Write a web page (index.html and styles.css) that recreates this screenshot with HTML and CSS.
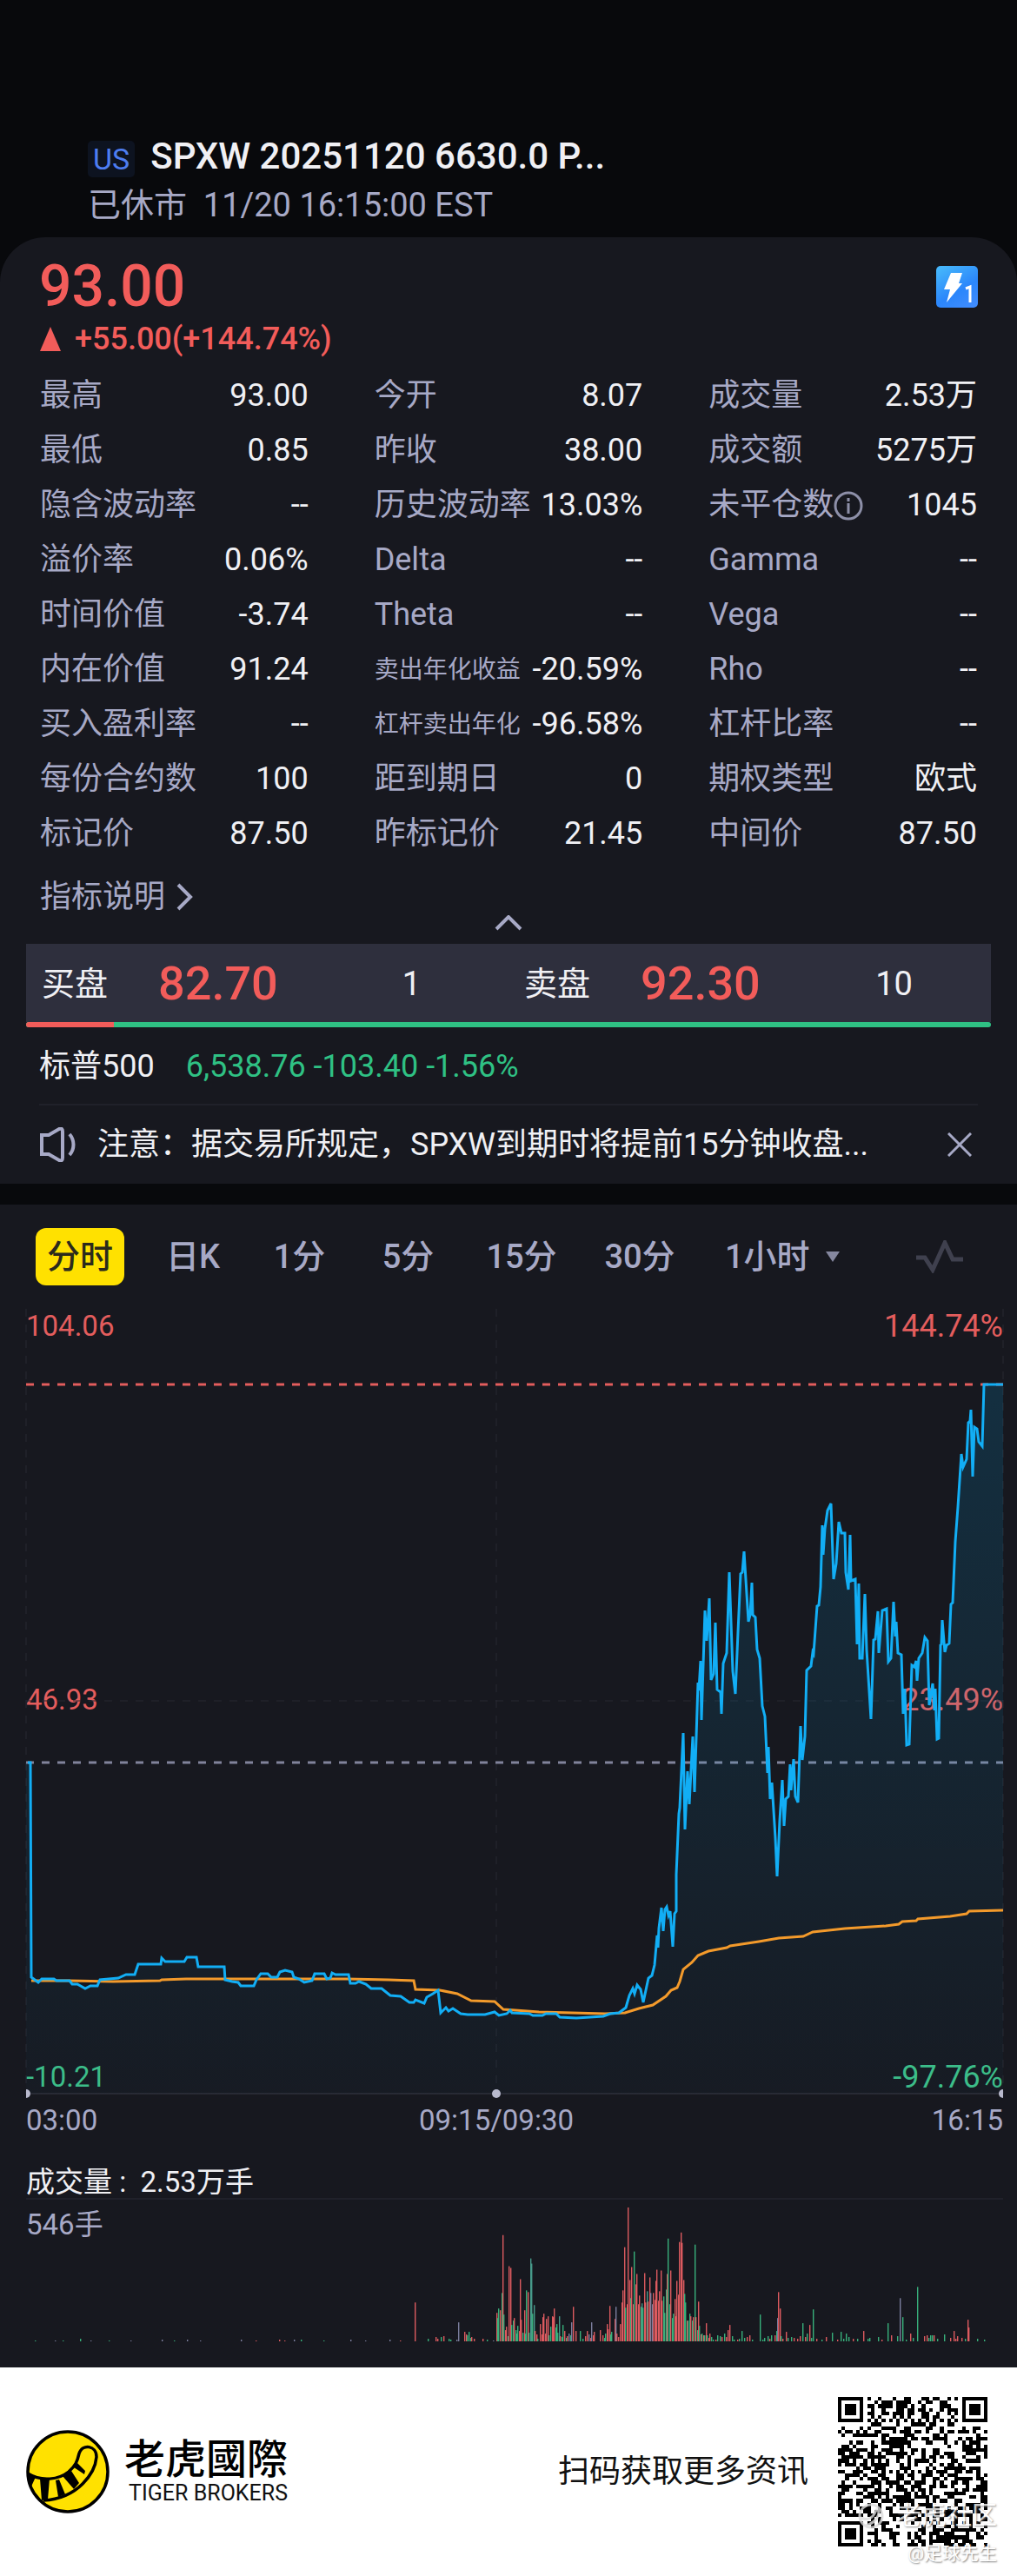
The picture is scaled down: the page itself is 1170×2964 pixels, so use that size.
FILE: index.html
```html
<!DOCTYPE html>
<html lang="zh-CN">
<head>
    <meta charset="utf-8">
    <meta name="viewport" content="width=device-width, initial-scale=1">
    <title>SPXW 20251120 6630.0 PUT</title>
    <link rel="stylesheet" href="styles.css">
</head>
<body>
    <header class="top">
        <div class="top-title">
            <span class="market">US</span>
            <h1>SPXW 20251120 6630.0 P...</h1>
        </div>
        <p class="top-status">已休市&nbsp; 11/20 16:15:00 EST</p>
    </header>

    <main>
        <section class="card quote">
            <div class="price-row">
                <span class="price">93.00</span>
                <svg class="level-icon" viewBox="0 0 48 48" role="img" aria-label="Level 1">
                    <defs>
                        <linearGradient id="lv" x1="0.2" y1="0" x2="0.8" y2="1">
                            <stop offset="0" stop-color="#45b5fb"/>
                            <stop offset="0.6" stop-color="#2b86fb"/>
                            <stop offset="1" stop-color="#3f8cff"/>
                        </linearGradient>
                    </defs>
                    <rect width="48" height="48" rx="5" fill="url(#lv)"/>
                    <path d="M17 8h13l-4 12h4L12 42l4-15H9z" fill="#fff"/>
                    <path d="M34 26l5-2v18" fill="none" stroke="#fff" stroke-width="3"/>
                </svg>
            </div>
            <p class="change">
                <svg class="up" viewBox="0 0 24 28"><path d="M12 0l12 28H0z"/></svg>
                +55.00(+144.74%)
            </p>

            <dl class="stats">
                <div><dt>最高</dt><dd>93.00</dd></div>
                <div><dt>今开</dt><dd>8.07</dd></div>
                <div><dt>成交量</dt><dd>2.53万</dd></div>
                <div><dt>最低</dt><dd>0.85</dd></div>
                <div><dt>昨收</dt><dd>38.00</dd></div>
                <div><dt>成交额</dt><dd>5275万</dd></div>
                <div><dt>隐含波动率</dt><dd>--</dd></div>
                <div><dt>历史波动率</dt><dd>13.03%</dd></div>
                <div>
                    <dt>未平仓数<svg class="info" viewBox="0 0 34 34"><circle cx="17" cy="17" r="15"/><path d="M17 14v12M17 8v4"/></svg></dt>
                    <dd>1045</dd>
                </div>
                <div><dt>溢价率</dt><dd>0.06%</dd></div>
                <div><dt>Delta</dt><dd>--</dd></div>
                <div><dt>Gamma</dt><dd>--</dd></div>
                <div><dt>时间价值</dt><dd>-3.74</dd></div>
                <div><dt>Theta</dt><dd>--</dd></div>
                <div><dt>Vega</dt><dd>--</dd></div>
                <div><dt>内在价值</dt><dd>91.24</dd></div>
                <div><dt class="small">卖出年化收益</dt><dd>-20.59%</dd></div>
                <div><dt>Rho</dt><dd>--</dd></div>
                <div><dt>买入盈利率</dt><dd>--</dd></div>
                <div><dt class="small">杠杆卖出年化</dt><dd>-96.58%</dd></div>
                <div><dt>杠杆比率</dt><dd>--</dd></div>
                <div><dt>每份合约数</dt><dd>100</dd></div>
                <div><dt>距到期日</dt><dd>0</dd></div>
                <div><dt>期权类型</dt><dd>欧式</dd></div>
                <div><dt>标记价</dt><dd>87.50</dd></div>
                <div><dt>昨标记价</dt><dd>21.45</dd></div>
                <div><dt>中间价</dt><dd>87.50</dd></div>
            </dl>

            <a class="explain" href="#">指标说明
                <svg viewBox="0 0 20 32"><path d="M3 2l14 14L3 30"/></svg>
            </a>
            <button class="collapse" type="button" aria-label="收起">
                <svg viewBox="0 0 32 18"><path d="M2 16L16 2l14 14"/></svg>
            </button>

            <div class="book">
                <div class="side"><span>买盘</span><b>82.70</b><span class="size">1</span></div>
                <div class="side"><span>卖盘</span><b>92.30</b><span class="size">10</span></div>
            </div>
            <div class="ratio"><i style="width: 9.1%"></i></div>

            <p class="index"><span>标普500</span><span class="down">6,538.76 -103.40 -1.56%</span></p>

            <div class="notice">
                <svg class="horn" viewBox="0 0 42 40">
                    <path d="M2 9h8l12-7c3-1 4 0 4 3v30c0 3-1 4-4 3l-12-7H2z"/>
                    <path d="M34 8c6 7 6 17 0 24"/>
                </svg>
                <p>注意：据交易所规定，SPXW到期时将提前15分钟收盘...</p>
                <button type="button" aria-label="关闭">
                    <svg viewBox="0 0 28 28"><path d="M1 1l26 26M27 1L1 27"/></svg>
                </button>
            </div>
        </section>

        <section class="card chart">
            <nav class="tabs">
                <button class="active" type="button">分时</button>
                <button type="button">日K</button>
                <button type="button">1分</button>
                <button type="button">5分</button>
                <button type="button">15分</button>
                <button type="button">30分</button>
                <div class="period">
                    <select aria-label="周期"><option>1小时</option></select>
                    <svg viewBox="0 0 16 12"><path d="M0 0h16L8 12z"/></svg>
                </div>
                <button type="button" aria-label="指标">
                    <svg class="wave" viewBox="0 0 54 38"><path d="M0 20h10l9 14L33 3l9 19h12"/></svg>
                </button>
            </nav>

            <div class="plot">
                <span class="tick high left">104.06</span>
                <span class="tick high right">144.74%</span>
                <span class="tick mid left">46.93</span>
                <span class="tick mid right">23.49%</span>
                <span class="tick low left">-10.21</span>
                <span class="tick low right">-97.76%</span>
                <svg viewBox="0 6 1170 904" preserveAspectRatio="none">
                    <defs>
                        <linearGradient id="fill" x1="0" y1="0" x2="0" y2="1">
                            <stop offset="0" stop-color="#00b4ff" stop-opacity="0.15"/>
                            <stop offset="1" stop-color="#00b4ff" stop-opacity="0.02"/>
                        </linearGradient>
                    </defs>
                    <path class="grid dash" d="M571 6V909M30 6V909M1154 6V909M30 457H1154"/>
                    <path class="grid" d="M30 909H1154"/>
                    <path class="line-high" d="M30 93H1154"/>
                    <path class="line-prev" d="M30 528H1154"/>
                    <polygon id="area" fill="url(#fill)"/>
                    <polyline id="avg"/>
                    <polyline id="last"/>
                </svg>
                <i class="dot first"></i>
                <i class="dot middle"></i>
                <i class="dot end"></i>
            </div>
            <div class="times"><span>03:00</span><span>09:15/09:30</span><span>16:15</span></div>

            <p class="vol-title">成交量 :&nbsp; 2.53万手</p>
            <div class="vol">
                <span>546手</span>
                <svg id="volume" viewBox="0 0 1170 164" preserveAspectRatio="none"></svg>
            </div>
        </section>
    </main>

    <footer>
        <svg class="logo" viewBox="0 0 96 96">
            <circle cx="48" cy="48" r="46" fill="#ffe100" stroke="#000" stroke-width="3.5"/>
            <path d="M2 50C18 60 38 57 49 48c8-7 10-12 12-21 4-12 20-9 20 4-1 12-7 22-16 31C53 74 39 80 20 81" fill="none" stroke="#000" stroke-width="3.5"/>
            <path d="M2 49l9 5-5 11zM16 56h11l-2 24-7 1zM34 58l4-1 7 17-8 3zM42 53l10-6 9 14-6 7zM55 43l4-5 9 9-1 4z"/>
        </svg>
        <div class="brand">
            <strong>老虎國際</strong>
            <span>TIGER BROKERS</span>
        </div>
        <p class="scan">扫码获取更多资讯</p>
        <div class="qr">
            <svg viewBox="0 0 41 41" shape-rendering="crispEdges" role="img" aria-label="二维码"><path id="qr"/></svg>
            <span class="mark mark-big">
                <svg viewBox="0 0 30 30"><circle cx="15" cy="15" r="13"/><path d="M3 17c10 4 15-1 18-9 5-2 5 13-12 18"/></svg>
                老虎社区
            </span>
            <span class="mark mark-user">@足球先生</span>
        </div>
    </footer>

    <script src="chart.js"></script>
</body>
</html>
```
FILE: styles.css
```css
* {
    box-sizing: border-box;
    margin: 0;
    padding: 0;
}

body {
    background: #08090c;
    color: #f0f0f4;
    font-family: Roboto, "Noto Sans CJK SC", sans-serif;
    font-size: 36px;
}

button, select {
    border: 0;
    background: none;
    color: inherit;
    font: inherit;
}

svg {
    display: block;
    flex: none;
}

.top {
    padding: 152px 101px 9px;
}
.top-title {
    display: flex;
    align-items: center;
    gap: 18px;
    height: 56px;
}
.top-title h1 {
    font-size: 42px;
    font-weight: 500;
    line-height: 56px;
}
.market {
    margin-top: 6px;
    padding: 0 6px;
    border-radius: 5px;
    background: #0d1320;
    color: #4d7df0;
    font-size: 34px;
    line-height: 42px;
}
.top-status {
    color: #a7a9c6;
    font-size: 38px;
    line-height: 56px;
}

.card {
    background: #17181f;
}
.quote {
    padding-top: 21px;
    border-radius: 52px 52px 0 0;
}
.price-row {
    display: flex;
    align-items: center;
    justify-content: space-between;
    padding: 0 45px;
}
.price {
    color: #f25c5a;
    font-size: 66px;
    font-weight: 500;
    line-height: 72px;
}
.level-icon {
    width: 48px;
}
.change {
    display: flex;
    align-items: center;
    gap: 16px;
    padding: 0 46px;
    color: #f25c5a;
    font-weight: 500;
    line-height: 48px;
}
.up {
    width: 24px;
    fill: #f25c5a;
}

.stats {
    display: grid;
    grid-template-columns: repeat(3, 1fr);
    column-gap: 76px;
    padding: 10px 46px 0;
}
.stats div {
    display: flex;
    align-items: center;
    justify-content: space-between;
    line-height: 63px;
    white-space: nowrap;
}
.stats dt {
    display: flex;
    align-items: center;
    color: #a7a9c6;
}
.stats dt.small {
    font-size: 28px;
}
.info {
    width: 34px;
    fill: none;
    stroke: #8d8fa8;
    stroke-width: 3;
}

.explain {
    display: flex;
    align-items: center;
    gap: 12px;
    margin: 20px 46px 0;
    color: #a7a9c6;
    line-height: 42px;
    text-decoration: none;
}
.explain svg {
    width: 20px;
}
.explain svg, .collapse svg, .horn, .notice button svg {
    fill: none;
    stroke: #a7a9c6;
    stroke-width: 4;
}
.collapse {
    display: block;
    margin: 0 auto 15px;
}
.collapse svg {
    width: 32px;
}

.book {
    display: grid;
    grid-template-columns: 1fr 1fr;
    margin: 0 30px;
    padding-top: 2px;
    background: #2e2f3d;
    font-size: 38px;
    line-height: 88px;
}
.side {
    display: grid;
    grid-template-columns: 134px 180px 1fr;
    padding-left: 18px;
}
.side b {
    color: #f25c5a;
    font-size: 54px;
    font-weight: 500;
}
.size {
    text-align: center;
}
.ratio {
    height: 6px;
    margin: 0 30px;
    border-radius: 3px;
    overflow: hidden;
    background: #2fc184;
}
.ratio i {
    display: block;
    height: 6px;
    background: #f25c5a;
}

.index {
    display: flex;
    gap: 36px;
    margin: 0 45px;
    padding-top: 2px;
    border-bottom: 2px solid #20212a;
    line-height: 86px;
}
.down {
    color: #2fc184;
}
.notice {
    display: flex;
    align-items: center;
    gap: 24px;
    height: 90px;
    padding: 0 52px 0 46px;
}
.horn {
    width: 42px;
}
.notice p {
    flex: 1;
    line-height: 90px;
    white-space: nowrap;
}
.notice button svg {
    width: 28px;
    stroke-width: 3;
}

.chart {
    margin-top: 24px;
    padding-bottom: 30px;
}
.tabs {
    display: grid;
    grid-template-columns: 130fr 130fr 115fr 135fr 126fr 146fr 182fr 179fr;
    align-items: center;
    justify-items: center;
    height: 120px;
    padding-left: 27px;
    color: #a7a9c6;
    font-size: 38px;
    font-weight: 500;
    line-height: 66px;
}
.tabs button {
    line-height: 66px;
}
.tabs .active {
    padding: 0 13px;
    border-radius: 12px;
    background: #ffe100;
    color: #2b2a1c;
}
.period {
    display: flex;
    align-items: center;
    gap: 18px;
}
.period select {
    appearance: none;
}
.period svg {
    width: 16px;
    fill: #85879f;
}
.wave {
    width: 54px;
    fill: none;
    stroke: #3f404e;
    stroke-width: 5;
}

.plot {
    position: relative;
}
.plot svg {
    position: relative;
    width: 100%;
    height: 904px;
}
.plot path, .plot polyline {
    fill: none;
    vector-effect: non-scaling-stroke;
}
.grid {
    stroke: #282932;
    stroke-width: 2;
}
.dash {
    stroke-width: 1;
    stroke-dasharray: 9 9;
}
.line-high, .line-prev {
    stroke: #e35d5d;
    stroke-width: 3;
    stroke-dasharray: 9 9;
}
.line-prev {
    stroke: #81839b;
}
#avg {
    stroke: #f39a2b;
    stroke-width: 3;
}
#last {
    stroke: #12aef5;
    stroke-width: 3;
}
.tick {
    position: absolute;
    color: #e35d5d;
    line-height: 40px;
}
.left {
    left: 30px;
    font-size: 33px;
}
.right {
    right: 16px;
    font-size: 36px;
}
.high {
    top: 0;
}
.mid {
    top: 430px;
}
.low {
    bottom: 0;
    color: #3dbd86;
}
.dot {
    position: absolute;
    bottom: -4px;
    width: 10px;
    height: 10px;
    border-radius: 50%;
    background: #b9bace;
}
.first {
    left: 30px;
    width: 5px;
    border-radius: 0 5px 5px 0;
}
.middle {
    left: calc(48.8% - 5px);
}
.end {
    right: 16px;
    width: 5px;
    border-radius: 5px 0 0 5px;
}

.times {
    display: grid;
    grid-template-columns: 1fr 2fr 1fr;
    padding: 0 16px 0 30px;
    color: #a7a9c6;
    font-size: 33px;
    line-height: 60px;
}
.times span:nth-child(2) {
    padding-right: 42px;
    text-align: center;
}
.times span:nth-child(3) {
    text-align: right;
}
.vol-title {
    margin: 0 16px 0 30px;
    padding-top: 22px;
    border-bottom: 2px solid #20212a;
    font-size: 33px;
    line-height: 37px;
}
.vol {
    position: relative;
}
.vol svg {
    width: 100%;
    height: 163px;
}
.vol span {
    position: absolute;
    top: 8px;
    left: 30px;
    color: #a7a9c6;
    font-size: 33px;
    line-height: 42px;
}

footer {
    display: flex;
    align-items: center;
    height: 240px;
    padding: 0 34px 0 30px;
    background: #fff;
    color: #111;
}
.logo {
    width: 96px;
}
.brand {
    margin-left: 17px;
    text-align: right;
}
.brand strong {
    display: block;
    color: #000;
    font-family: "Noto Sans CJK TC", sans-serif;
    font-size: 47px;
    font-weight: 500;
    line-height: 50px;
}
.brand span {
    display: block;
    font-size: 25px;
    line-height: 36px;
}
.scan {
    margin-left: auto;
    line-height: 48px;
}
.qr {
    position: relative;
    margin-left: 34px;
}
.qr > svg {
    width: 172px;
}
.mark {
    position: absolute;
    right: -11px;
    color: #fff;
    text-shadow: 1px 1px 2px #777;
    white-space: nowrap;
}
.mark-big {
    bottom: 17px;
    display: flex;
    align-items: center;
    gap: 14px;
    font-size: 29px;
    line-height: 36px;
    opacity: 0.8;
}
.mark-big svg {
    width: 30px;
    fill: none;
    stroke: #ddd;
    stroke-width: 3;
}
.mark-user {
    bottom: -22px;
    font-size: 21px;
    line-height: 28px;
}
```
FILE: chart.js
```js
// price and average lines, "x,y" in plot units
var last = '32,528 35,528 36,775 44,781 48,777 62,777 65,779 80,779 83,783 89,783 98,788 104,785 112,785 115,778 136,776 145,772 155,772 ' +
    '159,760 185,760 186,753 190,757 212,757 215,752 226,752 228,763 258,763 259,778 267,780 274,781 277,785 292,785 295,778 300,771 ' +
    '308,771 312,775 319,775 322,769 328,767 336,769 338,775 344,777 350,781 359,779 362,771 373,771 376,777 380,776 382,770 386,772 ' +
    '401,772 403,782 409,782 413,780 421,783 427,788 439,788 449,796 461,797 471,804 476,804 478,801 488,805 491,798 498,794 504,790 ' +
    '507,816 513,810 516,814 521,811 530,817 538,818 558,818 569,815 574,819 583,817 587,813 589,816 609,817 613,819 624,819 628,817 ' +
    '640,817 644,821 663,822 694,820 702,817 712,816 720,810 724,796 728,788 730,794 733,784 737,789 740,804 743,790 746,776 750,773 ' +
    '753,761 756,727 757,741 758,719 761,695 763,722 765,697 767,694 769,704 771,699 774,740 776,702 778,699 778,657 781,587 782,580 ' +
    '786,494 788,605 791,538 793,576 797,498 799,562 803,436 804,445 806,411 807,479 811,353 813,388 816,339 818,433 821,426 823,367 ' +
    '825,444 829,447 830,472 832,414 836,402 839,309 843,423 846,449 849,378 852,311 854,309 856,285 861,366 863,358 865,321 866,358 ' +
    '869,361 871,398 874,408 877,463 880,475 883,540 884,510 886,570 888,551 892,615 894,659 897,595 900,548 902,601 904,570 907,567 ' +
    '909,530 910,560 913,524 915,567 918,574 921,486 923,525 926,498 928,422 933,417 935,401 936,403 940,348 942,347 944,326 946,255 ' +
    '947,289 949,259 952,238 956,230 959,317 962,299 965,251 968,264 972,264 973,309 976,329 978,266 979,319 984,317 986,392 988,322 ' +
    '989,408 992,408 995,334 997,398 1002,478 1005,387 1007,386 1010,354 1011,402 1015,353 1020,351 1022,412 1025,408 1028,343 ' +
    '1030,383 1031,366 1033,402 1037,404 1039,472 1041,443 1043,508 1046,507 1049,416 1052,418 1054,411 1055,434 1057,408 1061,402 ' +
    '1064,384 1067,388 1069,462 1073,437 1075,468 1076,443 1078,501 1080,500 1082,393 1083,392 1084,364 1087,401 1089,393 1092,391 ' +
    '1094,346 1096,344 1099,274 1102,234 1106,173 1108,188 1112,179 1114,137 1116,135 1117,122 1119,199 1121,142 1124,144 1126,159 ' +
    '1130,164 1132,93 1154,93';
var avg = '36,779 79,779 130,780 184,779 186,778 214,777 277,777 399,777 447,778 476,779 478,789 506,790 526,794 542,802 569,803 ' +
    '579,812 620,815 696,817 719,816 735,811 751,807 766,797 772,790 779,787 782,780 786,766 796,758 803,750 815,745 836,741 840,739 ' +
    '873,734 896,730 924,728 935,723 972,719 1019,716 1034,714 1038,711 1054,710 1056,708 1093,705 1112,702 1115,699 1154,698';

document.getElementById('last').setAttribute('points', last);
document.getElementById('avg').setAttribute('points', avg);
document.getElementById('area').setAttribute('points', last + ' 1154,909 30,909 30,528');

// volume bars: x, height, colour (r up, g down, b flat, t mixed)
var bars = '40 1g 63 1b 72 1g 92 3g 104 1b 125 1g 150 1b 186 2b 200 1g 215 2b 230 1b 277 2b 294 1r 321 2r 327 1r 338 2b 346 2g 372 1g ' +
    '403 2b 420 1b 448 2b 460 1r 477 45r 492 3g 501 5r 503 3r 507 5g 510 6r 516 3g 518 2g 525 2b 527 22b 534 11r 536 8r 537 7g 539 11g ' +
    '541 4g 542 5r 545 3r 555 3r 560 2g 567 1b 571 33r 572 27g 573 38g 575 36r 577 56g 578 123r 579 31g 581 13r 582 17r 584 6g 585 87r 587 85r ' +
    '588 19g 590 24g 591 27r 593 13g 594 9g 595 18g 597 12r 598 72r 599 25r 601 10g 603 36r 604 9g 605 59g 607 57r 608 10g 610 96t ' +
    '611 90t 612 32g 614 42t 615 12r 617 8r 618 3g 621 20r 623 8r 624 28r 625 32r 627 9r 628 26r 630 29r 631 7g 633 17g 635 29r ' +
    '636 28r 637 38r 639 16g 640 20g 641 10g 643 29t 644 6r 646 5g 647 19g 649 12r 651 4g 652 6r 654 9b 656 7g 657 22b 659 40r 662 12r ' +
    '667 12g 670 3g 673 6r 675 12r 677 8b 679 4r 680 22b 682 7r 683 11r 690 13r 693 7r 695 4g 696 9g 698 20r 699 14r 701 41r 702 8g 703 11g ' +
    '707 26r 708 40b 709 9r 711 5r 713 20r 715 45r 716 59r 718 109r 719 39g 721 43r 722 155r 724 71r 725 50g 726 86r 728 43r 729 104g ' +
    '731 66r 732 78r 734 43r 735 53r 737 40g 738 44t 739 39g 741 79r 742 45r 744 58t 745 46r 747 74r 748 56b 750 43b 751 56r 753 48r ' +
    '754 70r 755 83r 757 47r 758 58r 760 82r 761 47r 763 52g 764 33g 766 60g 767 78r 768 119g 770 43g 771 82r 773 27g 774 32g ' +
    '776 49r 777 29r 778 70r 780 54r 781 115r 783 126r 784 114r 786 71r 787 55g 788 45g 790 24r 791 24g 793 32g 794 29r 796 24g ' +
    '797 28r 799 112g 800 28r 802 13g 803 46r 804 18g 806 8r 807 9g 809 7r 810 7g 812 21r 813 7g 815 4r 816 9r 818 5g 820 2g 823 2r 825 7g ' +
    '828 6g 830 5r 833 9g 835 5r 837 13r 839 19r 842 6g 844 2g 848 2r 850 3g 853 12g 856 4g 859 5r 862 7r 865 2g 874 31g 877 2g 879 4g 883 6g ' +
    '885 3r 887 7g 891 7r 893 12g 894 27b 895 57r 897 38r 898 6g 900 3r 904 11r 906 4g 910 5g 913 4r 917 3r 920 6r 923 21g 926 5r ' +
    '928 9g 931 19r 933 4g 935 37g 939 3r 945 2g 950 5r 957 10g 963 2r 967 11g 970 3g 973 9g 976 5g 981 3r 986 3g 993 12r 998 3g 1000 4g ' +
    '1010 5g 1014 2r 1021 21g 1025 7r 1032 6g 1035 50b 1038 28g 1042 2g 1047 9r 1050 4g 1055 63g 1063 6r 1066 7r 1068 4g 1070 7g ' +
    '1072 7g 1074 7r 1078 3g 1086 8g 1093 4r 1097 12r 1099 3r 1101 6r 1106 4r 1110 3g 1113 25r 1114 16r 1124 3g 1132 2g';
var colors = { r: '#dc5a5f', g: '#38b07b', b: '#7b7e9e', t: '#479a8a' };
var re = /(\d+) (\d+)([rgbt])/g;
var html = '';
var m;
while ((m = re.exec(bars))) {
    html += '<rect x="' + m[1] + '" y="' + (164 - m[2]) + '" width="1.4" height="' + m[2] + '" fill="' + colors[m[3]] + '"/>';
}
document.getElementById('volume').innerHTML = html;

// 41 x 41 code
var N = 41;

function ring(x, y, cx, cy) {
    return Math.max(Math.abs(x - cx), Math.abs(y - cy));
}

function isDark(x, y, rnd) {
    var corners = [[3, 3], [N - 4, 3], [3, N - 4]];
    for (var i = 0; i < 3; i++) {
        var d = ring(x, y, corners[i][0], corners[i][1]);
        if (d <= 4) return d < 2 || d == 3;
    }
    var a = ring(x, y, 34, 34);
    if (a <= 2) return a != 1;
    if (x == 6 || y == 6) return (x + y) % 2 == 0;
    return rnd < 0.5;
}

var seed = 20251120;
var path = '';
for (var y = 0; y < N; y++) {
    for (var x = 0; x < N; x++) {
        seed = (seed * 16807) % 2147483647;
        if (isDark(x, y, seed / 2147483647)) path += 'M' + x + ' ' + y + 'h1v1h-1z';
    }
}
document.getElementById('qr').setAttribute('d', path);
```
